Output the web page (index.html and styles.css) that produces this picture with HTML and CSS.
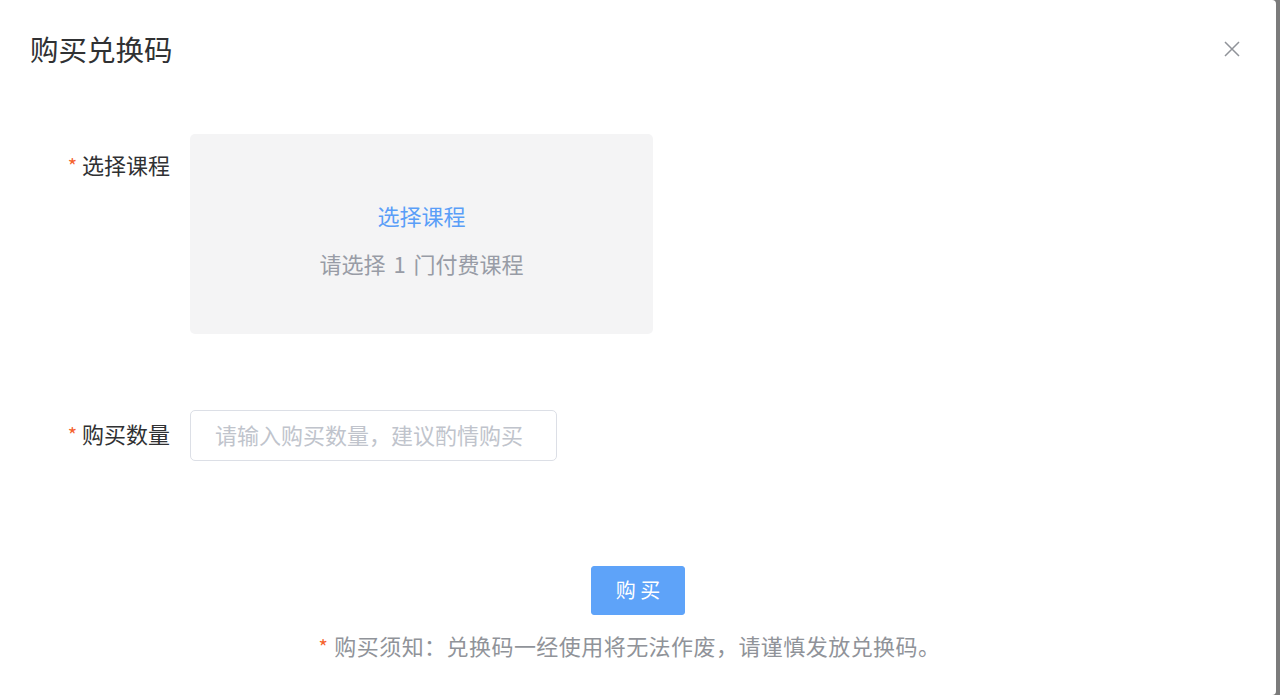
FILE: index.html
```html
<!DOCTYPE html>
<html lang="zh-CN">
<head>
<meta charset="utf-8">
<title>购买兑换码</title>
<link rel="stylesheet" href="styles.css">
</head>
<body>
<div class="dialog">
  <div class="header">
    <span class="title">购买兑换码</span>
    <button class="close" aria-label="关闭">
      <svg width="16" height="16" viewBox="0 0 16 16"><path d="M1 1 L15 15 M15 1 L1 15" stroke="#909399" stroke-width="1.5" fill="none"/></svg>
    </button>
  </div>
  <div class="body">
    <div class="row row-course">
      <label class="label"><span class="req">*</span>选择课程</label>
      <div class="picker">
        <div class="pick-link">选择课程</div>
        <div class="pick-tip">请选择 1 门付费课程</div>
      </div>
    </div>
    <div class="row row-qty">
      <label class="label"><span class="req">*</span>购买数量</label>
      <input class="input" type="text" placeholder="请输入购买数量，建议酌情购买">
    </div>
    <div class="actions">
      <button class="btn">购 买</button>
      <p class="notice"><span class="req">*</span>购买须知：兑换码一经使用将无法作废，请谨慎发放兑换码。</p>
    </div>
  </div>
</div>
</body>
</html>
```
FILE: styles.css
```css
html, body {
  margin: 0;
  padding: 0;
  height: 100%;
}
body {
  background: #7b7b7b;
  font-family: "Noto Sans CJK SC", "Noto Sans", sans-serif;
  overflow: hidden;
}
.dialog {
  width: 1276px;
  height: 695px;
  background: #fff;
  border-radius: 0 4px 4px 0;
  box-sizing: border-box;
}
.header {
  display: flex;
  justify-content: space-between;
  align-items: center;
  height: 100px;
  padding: 0 36px 0 30px;
}
.title {
  font-size: 28.5px;
  color: #303133;
  line-height: 1;
  margin-top: -2px;
}
.close {
  background: none;
  border: 0;
  padding: 0;
  width: 16px;
  height: 16px;
  cursor: pointer;
  display: flex;
  margin-top: -2px;
}
.body {
  padding-top: 34px;
}
.row {
  display: flex;
  align-items: flex-start;
}
.label {
  width: 170px;
  box-sizing: border-box;
  text-align: right;
  font-size: 22px;
  line-height: 40px;
  color: #303133;
  margin-right: 20px;
}
.row-course .label {
  padding-top: 10px;
}
.req {
  color: #f5622d;
  margin-right: 5px;
  font-size: 20px;
}
.picker {
  width: 463px;
  height: 200px;
  background: #f4f4f5;
  border-radius: 5px;
  display: flex;
  flex-direction: column;
  align-items: center;
  justify-content: center;
  gap: 16px;
  padding-top: 10px;
  box-sizing: border-box;
}
.pick-link {
  font-size: 22px;
  line-height: 32px;
  color: #5a9ef8;
}
.pick-tip {
  font-size: 22px;
  line-height: 32px;
  color: #989ca6;
  word-spacing: 3px;
}
.row-qty {
  margin-top: 76px;
  align-items: center;
}
.row-qty .label {
  margin-top: -4px;
}
.input {
  width: 367px;
  height: 51px;
  box-sizing: border-box;
  border: 1px solid #dcdfe6;
  border-radius: 5px;
  padding: 0 24px 4px;
  font-family: inherit;
  font-size: 22px;
  color: #606266;
  outline: none;
}
.input::placeholder {
  color: #c0c4cc;
}
.actions {
  display: flex;
  flex-direction: column;
  align-items: center;
  margin-top: 105px;
}
.btn {
  width: 94px;
  height: 49px;
  background: #5ea3f9;
  border: 1px solid #5ea3f9;
  border-radius: 3px;
  color: #fff;
  font-family: inherit;
  font-size: 20px;
  padding: 0 0 2px;
  cursor: pointer;
}
.notice {
  margin: 13px 17px 0 0;
  font-size: 22px;
  line-height: 34px;
  color: #909399;
  letter-spacing: 0.45px;
}
.notice .req {
  margin-right: 6px;
}
```
